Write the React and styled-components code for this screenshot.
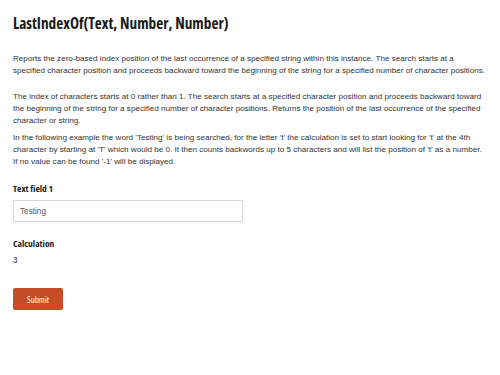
import React, { useState } from 'react'
import styled, { createGlobalStyle } from 'styled-components'

const GlobalStyle = createGlobalStyle`
  html, body {
    margin: 0;
    padding: 0;
    background: #ffffff;
    overflow-x: hidden;
  }
`

const condensed = `"Open Sans", "DejaVu Sans Condensed", sans-serif`

const intro = [
  [
    'Reports the zero-based index position of the last occurrence of a specified string within this instance. The search starts at a',
    'specified character position and proceeds backward toward the beginning of the string for a specified number of character positions.'
  ],
  [
    'The index of characters starts at 0 rather than 1. The search starts at a specified character position and proceeds backward toward',
    'the beginning of the string for a specified number of character positions. Returns the position of the last occurrence of the specified',
    'character or string.'
  ],
  [
    "In the following example the word 'Testing' is being searched, for the letter 't' the calculation is set to start looking for 't' at the 4th",
    "character by starting at 'T' which would be 0. It then counts backwords up to 5 characters and will list the position of 't' as a number.",
    "If no value can be found '-1' will be displayed."
  ]
]

const Page = styled.div`
  padding: 12px 0 0 13px;
  font-family: "Liberation Sans", Arial, sans-serif;
  color: #333333;
`

const Title = styled.h1`
  margin: 0 0 19px 0;
  font-family: ${condensed};
  font-stretch: 75%;
  font-weight: 700;
  font-size: 15.3px;
  line-height: 22px;
  color: #1a1a1a;
`

const Para = styled.p`
  margin: 0 0 ${({ gap }) => gap}px 0;
  font-size: 8.1px;
  line-height: 12px;
  white-space: nowrap;
  color: #333333;
`

const Label = styled.div`
  font-family: ${condensed};
  font-stretch: 75%;
  font-weight: 700;
  font-size: 9.5px;
  line-height: 12px;
  color: #222222;
  margin-bottom: 5px;
`

const Field = styled.div`
  margin-bottom: ${({ gap }) => gap}px;
`

const Input = styled.input`
  display: block;
  box-sizing: border-box;
  width: 230px;
  height: 22px;
  padding: 0 6px;
  border: 1px solid #d9d9d9;
  border-radius: 1px;
  font-family: "Liberation Sans", Arial, sans-serif;
  font-size: 8.2px;
  color: #555555;
  outline: none;
`

const Value = styled.div`
  font-size: 8.2px;
  line-height: 12px;
  color: #333333;
`

const Button = styled.button`
  display: block;
  width: 50px;
  height: 22px;
  padding: 0;
  border: none;
  border-radius: 2px;
  background: #c54e26;
  color: #ffffff;
  font-family: ${condensed};
  font-stretch: 75%;
  font-size: 9px;
  cursor: pointer;
`

const gaps = [14, 5, 15]

export default function App() {
  const [text, setText] = useState('Testing')
  return <Page>
    <GlobalStyle />
    <Title>LastIndexOf(Text, Number, Number)</Title>
    {intro.map((lines, i) => <Para key={i} gap={gaps[i]}>
      {lines.map((line, j) => <React.Fragment key={j}>
        {j > 0 && <br />}
        {line}
      </React.Fragment>)}
    </Para>)}
    <Field gap={16}>
      <Label>Text field 1</Label>
      <Input value={text} onChange={e => setText(e.target.value)} />
    </Field>
    <Field gap={21}>
      <Label>Calculation</Label>
      <Value>3</Value>
    </Field>
    <Button>Submit</Button>
  </Page>
}
